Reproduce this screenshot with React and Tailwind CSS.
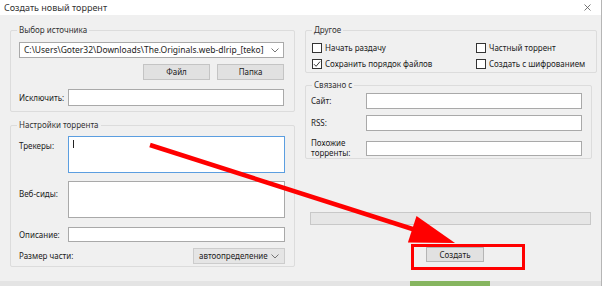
import React from 'react';

function Group({ title, className = '', children }) {
  return (
    <div className={`relative border border-[#dcdcdc] rounded-[2px] ${className}`}>
      <span className="absolute -top-[7px] left-[6px] bg-[#f0f0f0] px-[2px] leading-[12px] text-[#333]">
        {title}
      </span>
      {children}
    </div>
  );
}

function Chevron() {
  return (
    <svg width="8" height="5" viewBox="0 0 8 5" className="shrink-0">
      <path d="M0.5 0.5 L4 4 L7.5 0.5" fill="none" stroke="#666" strokeWidth="0.9" />
    </svg>
  );
}

function Box({ checked }) {
  return (
    <span className="w-[10px] h-[10px] border border-[#333] bg-white flex items-center justify-center shrink-0">
      {checked && (
        <svg width="8" height="8" viewBox="0 0 8 8">
          <path d="M1 4.2 L3.1 6.3 L7 1.6" fill="none" stroke="#333" strokeWidth="1" />
        </svg>
      )}
    </span>
  );
}

function Check({ label, checked }) {
  return (
    <label className="flex items-center gap-[3px] h-[10px]">
      <Box checked={checked} />
      <span className="leading-[10px]">{label}</span>
    </label>
  );
}

const input = 'bg-white border border-[#a9a9a9]';

export default function App() {
  return (
    <div className="relative w-[615px] h-[286px] bg-white overflow-hidden text-[8px] text-[#222]"
      style={{ fontFamily: '"Noto Sans", "DejaVu Sans", sans-serif' }}>
      <div className="w-[602px] h-[281px] border-r border-[#b5b5b5] flex flex-col">
        {/* title bar */}
        <div className="h-[15px] bg-white flex items-center justify-between pl-[4px] pr-[10px]">
          <span className="text-[9px] text-[#333]">Создать новый торрент</span>
          <svg width="7" height="7" viewBox="0 0 7 7">
            <path d="M0.5 0.5 L6.5 6.5 M6.5 0.5 L0.5 6.5" stroke="#555" strokeWidth="0.8" />
          </svg>
        </div>

        {/* body */}
        <div className="flex-1 bg-[#f0f0f0] pt-[15px] pl-[10px] flex gap-[10px]">
          {/* left column */}
          <div className="w-[285px] flex flex-col">
            <Group title="Выбор источника" className="h-[82px] pt-[11px] pl-[8px] pr-[10px]">
              <div className={`${input} h-[16px] flex items-center justify-between pl-[4px] pr-[4px]`}>
                <span className="text-[8.5px]">C:\Users\Goter32\Downloads\The.Originals.web-dlrip_[teko]</span>
                <Chevron />
              </div>
              <div className="flex justify-end gap-[7px] mt-[6px]">
                <button className="w-[67px] h-[16px] bg-[#e1e1e1] border border-[#c4c4c4]">Файл</button>
                <button className="w-[67px] h-[16px] bg-[#e1e1e1] border border-[#c4c4c4]">Папка</button>
              </div>
              <div className="flex items-center mt-[9px]">
                <span className="w-[49px]">Исключить:</span>
                <div className={`${input} flex-1 h-[17px]`} />
              </div>
            </Group>

            <Group title="Настройки торрента" className="mt-[13px] h-[142px] pt-[10px] pl-[8px] pr-[9px]">
              <div className="flex">
                <span className="w-[49px] pt-[4px]">Трекеры:</span>
                <div className="flex-1 h-[37px] bg-white border border-[#5b9ee0] pl-[4px] pt-[3px]">
                  <div className="w-px h-[8px] bg-[#222]" />
                </div>
              </div>
              <div className="flex mt-[8px]">
                <span className="w-[49px] pt-[7px]">Веб-сиды:</span>
                <div className={`${input} flex-1 h-[37px]`} />
              </div>
              <div className="flex items-center mt-[9px]">
                <span className="w-[49px]">Описание:</span>
                <div className={`${input} flex-1 h-[15px]`} />
              </div>
              <div className="flex items-center justify-between mt-[6px]">
                <span>Размер части:</span>
                <div className="w-[92px] h-[16px] bg-[#e5e5e5] border border-[#cccccc] flex items-center justify-between pl-[5px] pr-[5px]">
                  <span>автоопределение</span>
                  <Chevron />
                </div>
              </div>
            </Group>
          </div>

          {/* right column */}
          <div className="w-[292px] flex flex-col">
            <Group title="Другое" className="h-[43px] pt-[12px] pl-[6px]">
              <div className="grid grid-cols-[164px_1fr] gap-y-[6px]">
                <Check label="Начать раздачу" />
                <Check label="Частный торрент" />
                <Check label="Сохранить порядок файлов" checked />
                <Check label="Создать с шифрованием" />
              </div>
            </Group>

            <Group title="Связано с" className="mt-[12px] w-[287px] h-[74px] pt-[7px] pl-[5px] pr-[9px]">
              <div className="flex items-center">
                <span className="w-[55px]">Сайт:</span>
                <div className={`${input} flex-1 h-[16px]`} />
              </div>
              <div className="flex items-center mt-[6px]">
                <span className="w-[55px]">RSS:</span>
                <div className={`${input} flex-1 h-[16px]`} />
              </div>
              <div className="flex items-center mt-[7px]">
                <span className="w-[55px] leading-[10px]">Похожие<br />торренты:</span>
                <div className={`${input} flex-1 h-[15px]`} />
              </div>
            </Group>

            <div className="ml-[5px] mt-[53px] w-[281px] h-[13px] bg-[#e6e6e6] border border-[#c8c8c8]" />

            <button className="ml-[121px] mt-[22px] w-[58px] h-[15px] bg-[#e1e1e1] border border-[#b5b5b5]">
              Создать
            </button>
          </div>
        </div>
      </div>

      {/* desktop strip under the window */}
      <div className="w-[602px] h-[5px] bg-[#e4e4e4] border-r border-[#b5b5b5] flex">
        <div className="ml-[410px] w-[80px] h-full bg-[#86b55f]" />
      </div>

      {/* annotation overlay */}
      <div className="absolute left-[411px] top-[244px] w-[114px] h-[26px] border-[3px] border-[#f00]" />
      <svg className="absolute left-0 top-0 pointer-events-none" width="615" height="286">
        <line x1="150" y1="145" x2="414" y2="229.5" stroke="#f00" strokeWidth="4.5" />
        <polygon points="455,243 416.5,215.9 407.9,242.5" fill="#f00" />
      </svg>
    </div>
  );
}
